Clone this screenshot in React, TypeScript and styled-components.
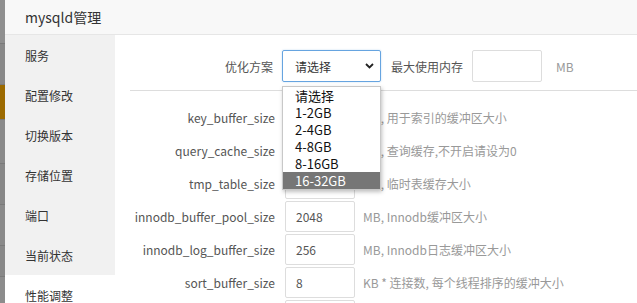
import React from 'react'
import styled, { createGlobalStyle } from 'styled-components'

const GlobalStyle = createGlobalStyle`
  html, body {
    margin: 0;
    padding: 0;
    background: #fff;
    overflow: hidden;
  }
  body {
    font-family: "Noto Sans CJK SC", "Noto Sans", sans-serif;
    font-size: 12px;
    color: #333;
  }
`

const menuItems = ['服务', '配置修改', '切换版本', '存储位置', '端口', '当前状态', '性能调整']

const options = ['请选择', '1-2GB', '2-4GB', '4-8GB', '8-16GB', '16-32GB']

const rows = [
  { name: 'key_buffer_size', value: '', desc: 'MB, 用于索引的缓冲区大小' },
  { name: 'query_cache_size', value: '', desc: 'MB, 查询缓存,不开启请设为0' },
  { name: 'tmp_table_size', value: '', desc: 'MB, 临时表缓存大小' },
  { name: 'innodb_buffer_pool_size', value: '2048', desc: 'MB, Innodb缓冲区大小' },
  { name: 'innodb_log_buffer_size', value: '256', desc: 'MB, Innodb日志缓冲区大小' },
  { name: 'sort_buffer_size', value: '8', desc: 'KB * 连接数, 每个线程排序的缓冲大小' },
  { name: 'read_buffer_size', value: '', desc: '' },
]

// the dimmed page behind the dialog, only a thin sliver shows
const backdropBands = [
  { h: 43, c: '#8f8f8f' },
  { h: 40, c: '#888' },
  { h: 34, c: '#9c6a00' },
  { h: 43, c: '#8a8a8a' },
  { h: 40, c: '#878787' },
  { h: 40, c: '#8a8a8a' },
  { h: 30, c: '#888' },
  { h: 40, c: '#8c8c8c' },
]

function App() {
  return (
    <>
      <GlobalStyle />
      <Page>
        <Backdrop>
          {backdropBands.map((b, i) => (
            <Band key={i} $h={b.h} $color={b.c} />
          ))}
        </Backdrop>
        <Dialog>
          <Header>mysqld管理</Header>
          <DialogBody>
            <Sidebar>
              {menuItems.map((m, i) => (
                <MenuItem key={m} $active={i === menuItems.length - 1}>
                  {m}
                </MenuItem>
              ))}
            </Sidebar>
            <Main>
              <TopRow>
                <TopLabel>优化方案</TopLabel>
                <SelectWrap>
                  <FakeSelect>
                    <span>请选择</span>
                    <svg width="9" height="6" viewBox="0 0 9 6">
                      <path d="M1 1 L4.5 4.5 L8 1" fill="none" stroke="#222" strokeWidth="1.8" />
                    </svg>
                  </FakeSelect>
                  <DropList>
                    {options.map((o, i) => (
                      <DropOption key={o} $selected={i === options.length - 1}>
                        {o}
                      </DropOption>
                    ))}
                  </DropList>
                </SelectWrap>
                <MemLabel>最大使用内存</MemLabel>
                <MemInput />
                <Unit>MB</Unit>
              </TopRow>
              <Divider />
              <FormGrid>
                {rows.map((r) => (
                  <React.Fragment key={r.name}>
                    <RowLabel>{r.name}</RowLabel>
                    <ValueBox>{r.value}</ValueBox>
                    <Desc>{r.desc}</Desc>
                  </React.Fragment>
                ))}
              </FormGrid>
            </Main>
          </DialogBody>
        </Dialog>
      </Page>
    </>
  )
}

export default App

const Page = styled.div`
  display: flex;
  width: 637px;
  height: 303px;
  overflow: hidden;
`

const Backdrop = styled.div`
  width: 5px;
  flex-shrink: 0;
  display: flex;
  flex-direction: column;
`

const Band = styled.div<{ $h: number; $color: string }>`
  height: ${(p) => p.$h}px;
  background: ${(p) => p.$color};
  border-bottom: 1px solid #7a7a7a;
  flex-shrink: 0;
`

const Dialog = styled.div`
  flex: 1;
  display: flex;
  flex-direction: column;
  background: #fff;
`

const Header = styled.div`
  height: 35px;
  flex-shrink: 0;
  box-sizing: border-box;
  padding-left: 20px;
  display: flex;
  align-items: center;
  font-size: 14px;
  color: #333;
  background: #f8f8f8;
  border-bottom: 1px solid #e6e6e6;
`

const DialogBody = styled.div`
  flex: 1;
  display: flex;
`

const Sidebar = styled.div`
  width: 110px;
  flex-shrink: 0;
  background: #f1f1f1;
  display: flex;
  flex-direction: column;
`

const MenuItem = styled.div<{ $active?: boolean }>`
  height: 40px;
  flex-shrink: 0;
  display: flex;
  align-items: center;
  padding-left: 20px;
  font-size: 12px;
  color: #333;
  background: ${(p) => (p.$active ? '#fff' : 'transparent')};
`

const Main = styled.div`
  flex: 1;
  padding: 15px 0 0 15px;
  display: flex;
  flex-direction: column;
`

const TopRow = styled.div`
  display: flex;
  align-items: center;
  height: 32px;
`

const TopLabel = styled.div`
  width: 143px;
  text-align: right;
  color: #555;
  margin-right: 9px;
`

const SelectWrap = styled.div`
  position: relative;
`

const FakeSelect = styled.div`
  box-sizing: border-box;
  width: 99px;
  height: 32px;
  border: 1px solid #66a4e0;
  border-radius: 2px;
  box-shadow: 0 0 2px rgba(102, 164, 224, 0.4);
  display: flex;
  align-items: center;
  justify-content: space-between;
  padding: 0 6px 0 12px;
  color: #333;
`

const DropList = styled.div`
  position: absolute;
  left: 0;
  top: 36px;
  width: 99px;
  box-sizing: border-box;
  background: #fff;
  border: 1px solid #c8c8c8;
  box-shadow: 1px 2px 4px rgba(0, 0, 0, 0.25);
  z-index: 5;
`

const DropOption = styled.div<{ $selected?: boolean }>`
  height: 17px;
  line-height: 17px;
  padding-left: 12px;
  font-size: 13px;
  color: ${(p) => (p.$selected ? '#fff' : '#111')};
  background: ${(p) => (p.$selected ? '#767676' : 'transparent')};
`

const MemLabel = styled.div`
  margin-left: 10px;
  color: #555;
`

const MemInput = styled.div`
  box-sizing: border-box;
  width: 70px;
  height: 32px;
  margin-left: 9px;
  border: 1px solid #ddd;
  border-radius: 2px;
`

const Unit = styled.div`
  margin-left: 14px;
  color: #999;
`

const Divider = styled.div`
  height: 1px;
  background: #ddd;
  margin: 8px 0 11px;
`

const FormGrid = styled.div`
  display: grid;
  grid-template-columns: 145px 70px auto;
  column-gap: 10px;
  row-gap: 2px;
  align-items: center;
`

const RowLabel = styled.div`
  text-align: right;
  color: #555;
`

const ValueBox = styled.div`
  box-sizing: border-box;
  height: 31px;
  border: 1px solid #ddd;
  border-radius: 2px;
  padding-left: 10px;
  display: flex;
  align-items: center;
  color: #555;
`

const Desc = styled.div`
  color: #999;
  margin-left: -2px;
`
